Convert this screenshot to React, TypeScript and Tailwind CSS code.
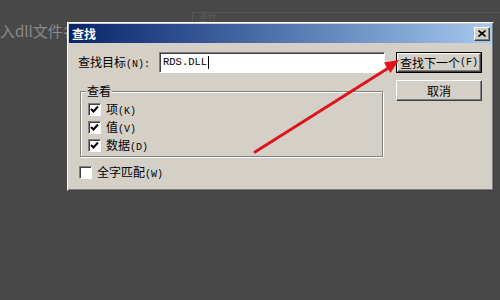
import React from "react";

const A = ({ children }: { children: React.ReactNode }) => (
  <span className="font-['Liberation_Mono',monospace] text-[10px]">{children}</span>
);

const raised =
  "border border-t-white border-l-white border-r-[#404040] border-b-[#404040] shadow-[inset_-1px_-1px_0_#808080] bg-[#d4d0c8]";

const Check = ({ checked, label }: { checked: boolean; label: React.ReactNode }) => (
  <div className="flex items-center h-[13px]">
    <div className="w-[13px] h-[13px] bg-white border border-t-[#808080] border-l-[#808080] border-r-white border-b-white shadow-[inset_1px_1px_0_#404040] flex items-center justify-center">
      {checked && (
        <svg width="9" height="9" viewBox="0 0 9 9">
          <polyline points="1,4 3.5,6.5 8,1.5" fill="none" stroke="#000" strokeWidth="2" />
        </svg>
      )}
    </div>
    <div className="ml-[5px] text-[12px] leading-none text-black whitespace-nowrap">{label}</div>
  </div>
);

export default function App() {
  return (
    <div className="w-[500px] h-[300px] bg-[#484848] relative overflow-hidden font-['Noto_Sans_CJK_SC',sans-serif]">
      {/* window behind */}
      <div className="absolute left-[192px] top-[12px] w-[320px] h-[10px] border-t border-l border-[#565656] pl-[6px] text-[9px] leading-[10px] text-[#5a5a5a]">
        查找
      </div>
      <div className="flex pt-[22px]">
        <div className="w-[67px] h-[30px] overflow-hidden whitespace-nowrap pt-[1px] text-[15px] leading-[16px] text-[#8a8a8a]">
          入dll文件名
        </div>
        {/* dialog */}
        <div className="w-[427px] h-[169px] border border-t-white border-l-white border-r-[#404040] border-b-[#404040] bg-[#d4d0c8]">
          <div className="h-full border border-t-[#d4d0c8] border-l-[#d4d0c8] border-r-[#808080] border-b-[#808080] flex flex-col">
            <div className="h-[19px] flex items-center bg-linear-to-r from-[#0a246a] to-[#a6caf0] pl-[3px] pr-[2px]">
              <span className="text-white font-bold text-[12px] leading-none">查找</span>
              <div className={`ml-auto w-[16px] h-[14px] flex items-center justify-center ${raised}`}>
                <svg width="8" height="7" viewBox="0 0 8 7">
                  <path d="M0.5 0.5 L7.5 6.5 M7.5 0.5 L0.5 6.5" stroke="#000" strokeWidth="1.6" />
                </svg>
              </div>
            </div>
            <div className="flex pt-[9px] pl-[9px]">
              <div className="w-[307px] flex flex-col">
                <div className="flex items-center h-[21px]">
                  <div className="w-[81px] text-[12px] leading-none text-black whitespace-nowrap">
                    查找目标<A>(N):</A>
                  </div>
                  <div className="w-[226px] h-[21px] bg-white border border-t-[#808080] border-l-[#808080] border-r-white border-b-white shadow-[inset_1px_1px_0_#404040] flex items-center pl-[3px]">
                    <span className="font-['Liberation_Mono',monospace] text-[10.5px] leading-none text-black">RDS.DLL</span>
                    <span className="w-[1px] h-[13px] bg-black ml-[1px]" />
                  </div>
                </div>
                <div className="mt-[18px] ml-[2px] w-[303px] h-[66px] relative border border-[#808080] shadow-[inset_1px_1px_0_white,1px_1px_0_white]">
                  <div className="absolute -top-[7px] left-[5px] px-[1px] bg-[#d4d0c8] text-[12px] leading-none text-black">
                    查看
                  </div>
                  <div className="pt-[11px] pl-[7px] flex flex-col gap-[5px]">
                    <Check checked label={<>项<A>(K)</A></>} />
                    <Check checked label={<>值<A>(V)</A></>} />
                    <Check checked label={<>数据<A>(D)</A></>} />
                  </div>
                </div>
                <div className="mt-[9px] ml-[1px]">
                  <Check checked={false} label={<>全字匹配<A>(W)</A></>} />
                </div>
              </div>
              <div className="ml-[11px] flex flex-col gap-[7px]">
                <div className="w-[86px] h-[21px] border border-black">
                  <div className={`w-full h-full flex items-center justify-center text-[12px] leading-none text-black ${raised}`}>
                    查找下一个<A>(F)</A>
                  </div>
                </div>
                <div className={`w-[86px] h-[21px] flex items-center justify-center text-[12px] leading-none text-black ${raised}`}>
                  取消
                </div>
              </div>
            </div>
          </div>
        </div>
      </div>
      {/* red arrow */}
      <svg className="absolute left-0 top-0 pointer-events-none" width="500" height="300">
        <line x1="255" y1="152" x2="390" y2="67" stroke="#e0141c" strokeWidth="3" strokeLinecap="round" />
        <polygon points="399,60 390.5,73 384,62.5" fill="#e0141c" />
      </svg>
    </div>
  );
}
